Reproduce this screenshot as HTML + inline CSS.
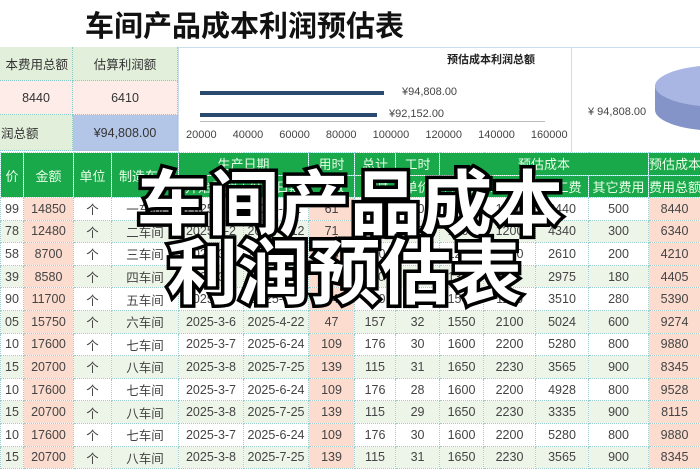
<!DOCTYPE html>
<html><head><meta charset="utf-8">
<style>
*{margin:0;padding:0;box-sizing:border-box}
body{width:700px;height:470px;overflow:hidden;background:#fff;position:relative;font-family:"Liberation Sans","Noto Sans CJK SC",sans-serif;color:#333}
.abs{position:absolute}
.title{left:85px;top:3px;font-size:29px;font-weight:bold;color:#111;letter-spacing:0px;white-space:nowrap}
.c{position:absolute;display:flex;align-items:center;justify-content:center;font-size:12.5px;border-right:1px dotted #8cc;border-bottom:1px dotted #8cc;white-space:nowrap;overflow:hidden}
.g{background:#e2efda}.p{background:#fdece7}.b{background:#b4c6e7}
table{position:absolute;left:0;top:152px;border-collapse:collapse;table-layout:fixed;width:700px}
td{border:1px dotted #9cc;text-align:center;font-size:12.5px;height:22.6px;padding:0;white-space:nowrap;overflow:hidden;color:#444}
th{background:#19a84a;color:#e8ffe8;font-weight:normal;font-size:13px;border:1px dotted #9dd;height:22.5px;padding:0;white-space:nowrap;overflow:hidden}
tr.e td{background:#edf5e8}
td.k{background:#fbdccf!important}
.big{position:absolute;font-size:71px;font-weight:bold;color:#fff;-webkit-text-stroke:7px #000;paint-order:stroke fill;white-space:nowrap;line-height:1;font-family:"Noto Sans CJK SC",sans-serif}
</style></head><body>
<div class="abs title">车间产品成本利润预估表</div>

<div class="c g" style="left:0;top:47px;width:73px;height:34px;justify-content:flex-end;padding-right:4px">本费用总额</div>
<div class="c g" style="left:73px;top:47px;width:105px;height:34px">估算利润额</div>
<div class="c p" style="left:0;top:81px;width:73px;height:34px">8440</div>
<div class="c p" style="left:73px;top:81px;width:105px;height:34px">6410</div>
<div class="c g" style="left:0;top:115px;width:73px;height:36px;justify-content:flex-start;padding-left:1px">润总额</div>
<div class="c b" style="left:73px;top:115px;width:105px;height:36px">¥94,808.00</div>

<div class="abs" style="left:178px;top:47px;width:522px;height:105px;border-top:1px solid #cde;border-left:1px solid #cde"></div>
<div class="abs" style="left:571px;top:47px;width:1px;height:105px;background:#cde"></div>
<div class="abs" style="left:447px;top:51px;font-size:11px;font-weight:bold;color:#222">预估成本利润总额</div>
<div class="abs" style="left:200px;top:91px;width:184px;height:4px;background:#2b4a6f"></div>
<div class="abs" style="left:200px;top:113px;width:177px;height:4px;background:#2b4a6f"></div>
<div class="abs" style="left:200px;top:121px;width:345px;height:1px;background:#bbb"></div>
<div class="abs" style="left:402px;top:86px;font-size:11px;color:#444">¥94,808.00</div>
<div class="abs" style="left:389px;top:108px;font-size:11px;color:#444">¥92,152.00</div>
<div class="abs" style="left:186px;top:129px;font-size:11px;color:#444;word-spacing:13px;white-space:nowrap">20000 40000 60000 80000 100000 120000 140000 160000</div>
<div class="abs" style="left:588px;top:106px;font-size:11px;color:#444">¥ 94,808.00</div>
<svg class="abs" style="left:650px;top:60px" width="50" height="80"><rect x="5" y="25" width="100" height="25" fill="#8594c8"/><ellipse cx="70" cy="50" rx="65" ry="21" fill="#8594c8"/><ellipse cx="70" cy="26" rx="65" ry="21" fill="#a9b5e2"/></svg>

<table>
<colgroup><col style="width:23px"><col style="width:50px"><col style="width:38px"><col style="width:67px"><col style="width:65px"><col style="width:65px"><col style="width:46px"><col style="width:41px"><col style="width:44px"><col style="width:44px"><col style="width:52px"><col style="width:53px"><col style="width:60px"><col style="width:52px"></colgroup>
<tr><th rowspan="2">价</th><th rowspan="2">金额</th><th rowspan="2">单位</th><th rowspan="2">制造车间</th><th colspan="2">生产日期</th><th>用时</th><th>总计</th><th>工时</th><th colspan="4">预估成本</th><th>预估成本</th></tr>
<tr><th>开始日期</th><th>结束日期</th><th>天数</th><th>工时</th><th>单价</th><th>材料费</th><th>制造费</th><th>人工费</th><th>其它费用</th><th>费用总额</th></tr>
<tr><td>99</td><td class="k">14850</td><td>个</td><td>一车间</td><td>2025-3-1</td><td>2025-5-1</td><td class="k">61</td><td>120</td><td>30</td><td>1500</td><td>1200</td><td>3440</td><td>500</td><td class="k">8440</td></tr>
<tr class="e"><td>78</td><td class="k">12480</td><td>个</td><td>二车间</td><td>2025-3-2</td><td>2025-5-12</td><td class="k">71</td><td>125</td><td>35</td><td>1600</td><td>1200</td><td>4340</td><td>300</td><td class="k">6340</td></tr>
<tr><td>58</td><td class="k">8700</td><td>个</td><td>三车间</td><td>2025-3-3</td><td>2025-4-15</td><td class="k">43</td><td>100</td><td>30</td><td>1200</td><td>1000</td><td>2610</td><td>200</td><td class="k">4210</td></tr>
<tr class="e"><td>39</td><td class="k">8580</td><td>个</td><td>四车间</td><td>2025-3-4</td><td>2025-4-30</td><td class="k">57</td><td>110</td><td>35</td><td>1350</td><td>900</td><td>2975</td><td>180</td><td class="k">4405</td></tr>
<tr><td>90</td><td class="k">11700</td><td>个</td><td>五车间</td><td>2025-3-5</td><td>2025-5-8</td><td class="k">64</td><td>120</td><td>30</td><td>1500</td><td>1100</td><td>3510</td><td>280</td><td class="k">5390</td></tr>
<tr class="e"><td>05</td><td class="k">15750</td><td>个</td><td>六车间</td><td>2025-3-6</td><td>2025-4-22</td><td class="k">47</td><td>157</td><td>32</td><td>1550</td><td>2100</td><td>5024</td><td>600</td><td class="k">9274</td></tr>
<tr><td>10</td><td class="k">17600</td><td>个</td><td>七车间</td><td>2025-3-7</td><td>2025-6-24</td><td class="k">109</td><td>176</td><td>30</td><td>1600</td><td>2200</td><td>5280</td><td>800</td><td class="k">9880</td></tr>
<tr class="e"><td>15</td><td class="k">20700</td><td>个</td><td>八车间</td><td>2025-3-8</td><td>2025-7-25</td><td class="k">139</td><td>115</td><td>31</td><td>1650</td><td>2230</td><td>3565</td><td>900</td><td class="k">8345</td></tr>
<tr><td>10</td><td class="k">17600</td><td>个</td><td>七车间</td><td>2025-3-7</td><td>2025-6-24</td><td class="k">109</td><td>176</td><td>28</td><td>1600</td><td>2200</td><td>4928</td><td>800</td><td class="k">9528</td></tr>
<tr class="e"><td>15</td><td class="k">20700</td><td>个</td><td>八车间</td><td>2025-3-8</td><td>2025-7-25</td><td class="k">139</td><td>115</td><td>29</td><td>1650</td><td>2230</td><td>3335</td><td>900</td><td class="k">8115</td></tr>
<tr><td>10</td><td class="k">17600</td><td>个</td><td>七车间</td><td>2025-3-7</td><td>2025-6-24</td><td class="k">109</td><td>176</td><td>30</td><td>1600</td><td>2200</td><td>5280</td><td>800</td><td class="k">9880</td></tr>
<tr class="e"><td>15</td><td class="k">20700</td><td>个</td><td>八车间</td><td>2025-3-8</td><td>2025-7-25</td><td class="k">139</td><td>115</td><td>31</td><td>1650</td><td>2230</td><td>3565</td><td>900</td><td class="k">8345</td></tr>
</table>

<div class="big" style="left:137px;top:164px">车间产品成本</div>
<div class="big" style="left:167px;top:233px">利润预估表</div>
</body></html>
